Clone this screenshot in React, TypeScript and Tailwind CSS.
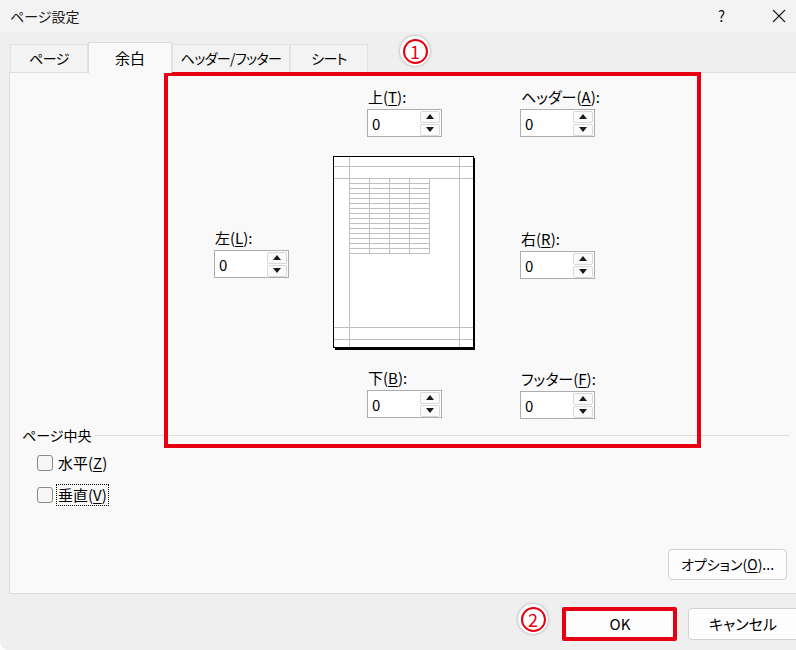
import React from 'react';

const font = {
  fontFamily: '"Noto Sans CJK JP", "Noto Sans", sans-serif',
};

// 上下ボタン付きの数値入力
const SpinBox = ({ value = '0' }: { value?: string }) => (
  <div className="flex h-[28px] w-[75px] items-center border border-[#adadad] bg-white">
    <span className="flex-1 pl-[4px] text-[15px] leading-none text-black">
      {value}
    </span>
    <div className="mr-[1px] flex w-[20px] flex-col gap-[1px]">
      <div className="flex h-[12px] items-center justify-center rounded-[2px] border border-[#d9d9d9] bg-[#fbfbfb]">
        <svg width="8" height="5" viewBox="0 0 8 5">
          <polygon points="4,0 8,5 0,5" fill="#1a1a1a" />
        </svg>
      </div>
      <div className="flex h-[12px] items-center justify-center rounded-[2px] border border-[#d9d9d9] bg-[#fbfbfb]">
        <svg width="8" height="5" viewBox="0 0 8 5">
          <polygon points="0,0 8,0 4,5" fill="#1a1a1a" />
        </svg>
      </div>
    </div>
  </div>
);

const Field = ({ label, keyChar }: { label: string; keyChar: string }) => (
  <div className="flex flex-col">
    <div className="h-[20px] pl-[1px] text-[15px] leading-[20px] text-black">
      {label}(<span className="underline underline-offset-2">{keyChar}</span>):
    </div>
    <div className="mt-[2px]">
      <SpinBox />
    </div>
  </div>
);

// 余白プレビュー
const PagePreview = () => {
  const rows = Array.from({ length: 16 }, (_, i) => 22 + i * 5);
  const cols = [16, 36, 56, 76, 96];
  return (
    <svg width="143" height="194" viewBox="0 0 143 194">
      <rect x="2" y="2" width="140" height="192" fill="#000" />
      <rect x="0.5" y="0.5" width="140" height="191" fill="#fff" stroke="#000" />
      <g stroke="#c0c0c0" strokeWidth="1">
        <line x1="16.5" y1="1" x2="16.5" y2="191" />
        <line x1="126.5" y1="1" x2="126.5" y2="191" />
        <line x1="1" y1="10.5" x2="140" y2="10.5" />
        <line x1="1" y1="22.5" x2="140" y2="22.5" />
        <line x1="1" y1="171.5" x2="140" y2="171.5" />
        <line x1="1" y1="183.5" x2="140" y2="183.5" />
        {rows.map((y) => (
          <line key={y} x1="16" y1={y + 0.5} x2="96.5" y2={y + 0.5} />
        ))}
        {cols.map((x) => (
          <line key={x} x1={x + 0.5} y1="22" x2={x + 0.5} y2="97.5" />
        ))}
      </g>
    </svg>
  );
};

const Callout = ({ n }: { n: string }) => (
  <div className="flex h-[30px] w-[30px] items-center justify-center rounded-full bg-white shadow-[0_0_3px_rgba(0,0,0,0.35)]">
    <div className="flex h-[25px] w-[25px] items-center justify-center rounded-full border-2 border-[#e60012] text-[18px] leading-none text-[#e60012]">
      {n}
    </div>
  </div>
);

const Tab = ({ label, active, w }: { label: string; active?: boolean; w: string }) =>
  active ? (
    <div
      className={`${w} relative z-10 -mb-[1px] flex h-[31px] items-center justify-center border border-b-0 border-[#dcdcdc] bg-[#f9f9f9] text-[15px] text-black`}
    >
      {label}
    </div>
  ) : (
    <div
      className={`${w} flex h-[28px] items-center justify-center border border-b-0 border-[#e3e3e3] bg-[#f3f3f3] text-[14px] tracking-[-0.6px] text-black`}
    >
      {label}
    </div>
  );

export default function App() {
  return (
    <div
      className="relative h-[650px] w-[796px] overflow-hidden rounded-bl-[8px] bg-[#efefef] [font-feature-settings:'palt']"
      style={font}
    >
      {/* タイトルバー */}
      <div className="flex h-[32px] items-center bg-[#f3f3f3] pl-[10px]">
        <span className="text-[14px] text-[#1a1a1a]">ページ設定</span>
        <span className="ml-auto text-[15px] text-[#1a1a1a]">?</span>
        <svg className="ml-[47px] mr-[10px]" width="14" height="14" viewBox="0 0 14 14">
          <path d="M1 1 L13 13 M13 1 L1 13" stroke="#1a1a1a" strokeWidth="1.1" />
        </svg>
      </div>

      {/* タブ */}
      <div className="flex items-end pl-[10px] pt-[10px]">
        <Tab label="ページ" w="w-[78px]" />
        <Tab label="余白" active w="w-[84px]" />
        <Tab label="ヘッダー/フッター" w="w-[118px]" />
        <Tab label="シート" w="w-[78px]" />
      </div>

      {/* パネル */}
      <div className="ml-[9px] flex h-[522px] w-[792px] flex-col border border-[#dcdcdc] bg-[#f9f9f9]">
        <div className="flex">
          <div className="ml-[204px] pt-[155px]">
            <Field label="左" keyChar="L" />
          </div>
          <div className="ml-[44px] flex w-[143px] flex-col pt-[14px]">
            <div className="ml-[34px]">
              <Field label="上" keyChar="T" />
            </div>
            <div className="mt-[19px]">
              <PagePreview />
            </div>
            <div className="ml-[34px] mt-[18px]">
              <Field label="下" keyChar="B" />
            </div>
          </div>
          <div className="ml-[44px] flex flex-col pt-[14px]">
            <Field label="ヘッダー" keyChar="A" />
            <div className="mt-[92px]">
              <Field label="右" keyChar="R" />
            </div>
            <div className="mt-[90px]">
              <Field label="フッター" keyChar="F" />
            </div>
          </div>
        </div>

        {/* ページ中央 */}
        <div className="mr-[11px] mt-[6px] flex items-center pl-[12px]">
          <span className="text-[14px] leading-[20px] text-black">ページ中央</span>
          <div className="ml-[4px] h-px flex-1 bg-[#dcdcdc]" />
        </div>
        <div className="mt-[9px] flex flex-col gap-[12px] pl-[27px]">
          <label className="flex items-center">
            <span className="h-[16px] w-[16px] rounded-[3px] border border-[#8a8a8a] bg-[#f6f6f6]" />
            <span className="ml-[5px] text-[15px] leading-[18px] text-black">
              水平(<span className="underline underline-offset-2">Z</span>)
            </span>
          </label>
          <label className="flex items-center">
            <span className="h-[16px] w-[16px] rounded-[3px] border border-[#8a8a8a] bg-[#f6f6f6]" />
            <span className="ml-[3px] border border-dotted border-black px-[1px] text-[15px] leading-[20px] text-black">
              垂直(<span className="underline underline-offset-2">V</span>)
            </span>
          </label>
        </div>

        <div className="mt-auto mb-[13px] flex justify-end pr-[13px]">
          <button className="h-[31px] w-[119px] rounded-[4px] border border-[#d0d0d0] bg-[#fdfdfd] text-[14px] text-black">
            オプション(<span className="underline underline-offset-2">O</span>)...
          </button>
        </div>
      </div>

      {/* 下部ボタン */}
      <div className="mt-[14px] flex items-center">
        <button className="ml-[565px] h-[32px] w-[110px] shrink-0 rounded-[4px] border border-[#1e4f91] bg-[#fdfdfd] text-[15px] text-black">
          OK
        </button>
        <button className="ml-[13px] h-[32px] w-[116px] shrink-0 rounded-[4px] border border-[#d0d0d0] bg-[#fdfdfd] pr-[6px] text-[15px] text-black">
          キャンセル
        </button>
      </div>

      {/* 注釈 */}
      <div className="pointer-events-none absolute left-[164px] top-[72px] h-[376px] w-[537px] border-[4px] border-[#e60012]" />
      <div className="pointer-events-none absolute left-[562px] top-[607px] h-[34px] w-[115px] rounded-[2px] border-[4px] border-[#e60012]" />
      <div className="absolute left-[400px] top-[36px]">
        <Callout n="1" />
      </div>
      <div className="absolute left-[518px] top-[604px]">
        <Callout n="2" />
      </div>
    </div>
  );
}
